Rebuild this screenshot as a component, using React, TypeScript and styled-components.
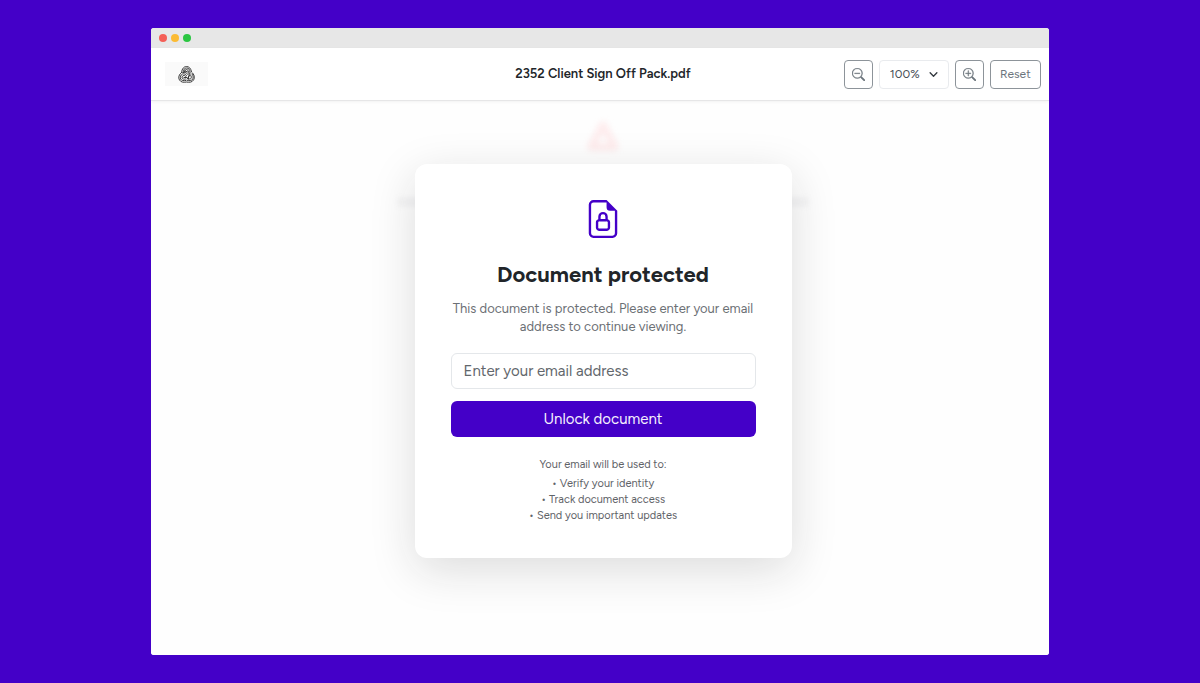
import React from "react";
import styled, { createGlobalStyle } from "styled-components";
import { BsFileEarmarkLock, BsZoomIn, BsZoomOut } from "react-icons/bs";

const GlobalStyle = createGlobalStyle`
  *, *::before, *::after { box-sizing: border-box; }
  body {
    margin: 0;
    background: #4400c8;
    color: #212529;
    font-family: Figtree, Lato, "Liberation Sans", sans-serif;
  }
  button, input, select { font: inherit; }
`;

const Page = styled.div`
  display: flex;
  min-height: 100vh;
  padding: 28px 12.6%;
`;

const BrowserWindow = styled.div`
  display: flex;
  flex: 1;
  flex-direction: column;
  overflow: hidden;
  border-radius: 3px;
  background: #fff;
`;

const TitleBar = styled.div`
  display: flex;
  align-items: center;
  gap: 4px;
  height: 20px;
  padding: 0 8px;
  background: #e7e7e7;
`;

const Dot = styled.span<{ $color: string }>`
  width: 8px;
  height: 8px;
  border-radius: 50%;
  background: ${(p) => p.$color};
`;

const Toolbar = styled.header`
  position: relative;
  display: grid;
  grid-template-columns: 1fr auto 1fr;
  align-items: center;
  height: 53px;
  padding: 0 8px 0 14px;
  border-bottom: 1px solid #e6e6e7;
  box-shadow: 0 1px 3px rgba(0, 0, 0, 0.05);
  z-index: 1;
`;

const LogoBox = styled.div`
  display: flex;
  align-items: center;
  justify-content: center;
  width: 43px;
  height: 24px;
  background: #fafafa;
`;

const FileName = styled.h1`
  margin: 0;
  font-size: 13px;
  line-height: 20px;
  font-weight: 600;
`;

const Controls = styled.div`
  display: flex;
  justify-content: flex-end;
  gap: 6px;
`;

const ToolButton = styled.button<{ $square?: boolean }>`
  display: flex;
  align-items: center;
  justify-content: center;
  width: ${(p) => (p.$square ? "29px" : "51px")};
  height: 29px;
  padding: 0;
  border: 1px solid #8d949a;
  border-radius: 4px;
  background: #fff;
  color: #6c757d;
  font-size: 12px;
  cursor: pointer;
`;

const SelectWrap = styled.div`
  position: relative;
  width: 70px;
  height: 29px;

  svg {
    position: absolute;
    top: 10px;
    right: 11px;
    pointer-events: none;
  }
`;

const ZoomSelect = styled.select`
  width: 100%;
  height: 100%;
  padding: 0 10px;
  border: 1px solid #e9ebee;
  border-radius: 4px;
  appearance: none;
  background: #fff;
  color: #495057;
  font-size: 12px;
`;

const Stage = styled.main`
  position: relative;
  display: flex;
  flex: 1;
  align-items: flex-start;
  justify-content: center;
  padding: 63px 0 64px 6px;
  background: #fefefe;
`;

const Backdrop = styled.div`
  position: absolute;
  top: 18px;
  left: 6px;
  right: 0;
  display: flex;
  flex-direction: column;
  align-items: center;
  gap: 48px;
  filter: blur(3px);
`;

const BackdropLine = styled.div`
  width: 410px;
  height: 6px;
  background: #f1f1f2;
`;

const Card = styled.form`
  position: relative;
  display: flex;
  flex-direction: column;
  align-items: center;
  width: 377px;
  max-width: 100%;
  padding: 36px 36px 34px;
  border-radius: 12px;
  background: #fff;
  box-shadow: 0 12px 46px rgba(25, 25, 25, 0.15);
  text-align: center;
`;

const Heading = styled.h2`
  margin: 22px 0 10px;
  font-size: 22px;
  line-height: 30px;
  font-weight: 700;
`;

const Lead = styled.p`
  margin: 0 0 17px;
  color: #6c7075;
  font-size: 13px;
  line-height: 18px;
`;

const EmailInput = styled.input`
  width: 100%;
  height: 36px;
  margin-bottom: 12px;
  padding: 0 12px;
  border: 1px solid #e4e7ea;
  border-radius: 6px;
  background: #fff;
  color: #212529;
  font-size: 15px;

  &::placeholder { color: #62676c; opacity: 1; }
`;

const UnlockButton = styled.button`
  width: 100%;
  height: 36px;
  border: 0;
  border-radius: 6px;
  background: #4400c8;
  color: #f4effd;
  font-size: 15px;
  cursor: pointer;
`;

const Notes = styled.div`
  margin-top: 20px;
  color: #5f6368;
  font-size: 11px;
  line-height: 16px;
`;

const NotesTitle = styled.p`
  margin: 0 0 3px;
`;

const NotesList = styled.ul`
  margin: 0;
  padding: 0;
  list-style: none;

  li::before { content: "• "; }
`;

const WoolLogo = () => (
  <svg width="17" height="17" viewBox="0 0 34 34" fill="none" stroke="#3a3a3a" strokeWidth="2" strokeLinecap="round" strokeLinejoin="round" aria-hidden="true">
    <path d="M7 13C8 5 12 1 17 1s9 4 10 11c6 5 7 12 4 16-3 5-9 5-14 4-5 1-11 1-14-4-3-5-1-11 4-15Z" />
    <path d="M10 13c1-6 3-9 7-9s7 3 7 8" />
    <path d="M13 12c1-4 2-5 4-5s4 2 4 5" />
    <path d="M28 16c3 4 3 8 1 11-2 2-6 3-10 2" />
    <path d="M25 18c2 3 2 5 1 7-1 1-3 1-6 1" />
    <path d="M16 29c-5 1-9 0-11-3-1-4 0-8 4-10 3-1 6 0 8 3" />
    <path d="M15 26c-3 1-6 0-7-2 0-3 1-5 4-5 2 0 3 1 4 3" />
    <path d="M10 13c5-1 8 1 11 5M13 10c5 0 8 3 10 6" />
    <path d="M24 13c0 6-2 9-6 13M21 20v6M12 23h6" />
  </svg>
);

export default function App() {
  return (
    <>
      <GlobalStyle />
      <Page>
        <BrowserWindow>
          <TitleBar>
            <Dot $color="#f45f57" />
            <Dot $color="#fbbb34" />
            <Dot $color="#2bc642" />
          </TitleBar>
          <Toolbar>
            <LogoBox>
              <WoolLogo />
            </LogoBox>
            <FileName>2352 Client Sign Off Pack.pdf</FileName>
            <Controls>
              <ToolButton type="button" $square aria-label="Zoom out">
                <BsZoomOut size={13} strokeWidth={0.4} />
              </ToolButton>
              <SelectWrap>
                <ZoomSelect aria-label="Zoom level" defaultValue="100">
                  <option value="50">50%</option>
                  <option value="100">100%</option>
                  <option value="150">150%</option>
                </ZoomSelect>
                <svg width="9" height="9" viewBox="0 0 16 16" fill="none" stroke="#343a40" strokeWidth="2.4" strokeLinecap="round" strokeLinejoin="round" aria-hidden="true">
                  <path d="m2 5 6 6 6-6" />
                </svg>
              </SelectWrap>
              <ToolButton type="button" $square aria-label="Zoom in">
                <BsZoomIn size={13} strokeWidth={0.4} />
              </ToolButton>
              <ToolButton type="button">Reset</ToolButton>
            </Controls>
          </Toolbar>
          <Stage>
            <Backdrop aria-hidden="true">
              <svg width="36" height="32" viewBox="0 0 36 32" fill="none" stroke="#feebec" strokeWidth="7" strokeLinejoin="round">
                <path d="M18 6 30 28H6Z" />
              </svg>
              <BackdropLine />
            </Backdrop>
            <Card onSubmit={(e) => e.preventDefault()}>
              <BsFileEarmarkLock size={38} color="#4400c8" />
              <Heading>Document protected</Heading>
              <Lead>This document is protected. Please enter your email address to continue viewing.</Lead>
              <EmailInput type="email" aria-label="Email address" placeholder="Enter your email address" />
              <UnlockButton type="submit">Unlock document</UnlockButton>
              <Notes>
                <NotesTitle>Your email will be used to:</NotesTitle>
                <NotesList>
                  <li>Verify your identity</li>
                  <li>Track document access</li>
                  <li>Send you important updates</li>
                </NotesList>
              </Notes>
            </Card>
          </Stage>
        </BrowserWindow>
      </Page>
    </>
  );
}
